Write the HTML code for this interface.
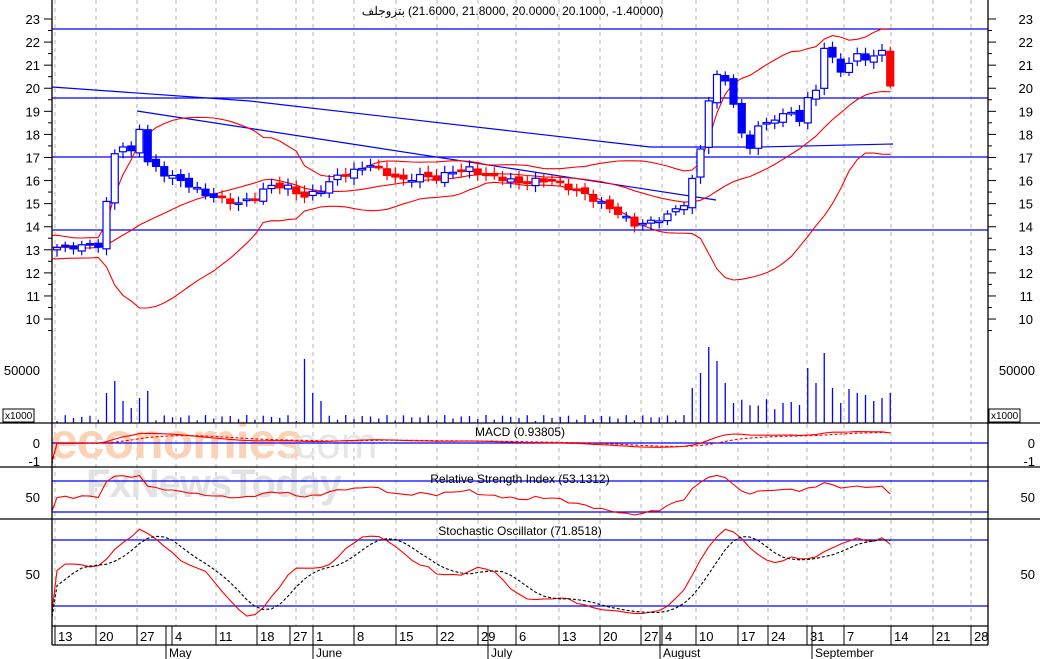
<!DOCTYPE html>
<html><head><meta charset="utf-8">
<style>
html,body{margin:0;padding:0;background:#fff;}
svg{display:block;font-family:"Liberation Sans","Noto Sans CJK SC",sans-serif;}
</style></head>
<body>
<svg id="c" width="1040" height="659" viewBox="0 0 1040 659" xmlns="http://www.w3.org/2000/svg">
<rect width="1040" height="659" fill="#fff"/>
<g id="grid" stroke="#b4b4b4" stroke-dasharray="4,4" stroke-width="1"></g>
<g id="wm">
<text x="50" y="458" font-size="50" fill="#fbd2b6" font-weight="bold" letter-spacing="-1">economies</text>
<text x="282" y="458" font-size="44" fill="#e6e6e6">.com</text>
<text x="86" y="497" font-size="40" fill="#e2e2e2" font-weight="bold" letter-spacing="-1">FxNewsToday</text>
</g>
<g id="plot"></g>
<g id="axes" stroke="#000" stroke-width="1.3" fill="none">
<line x1="52" y1="0" x2="52" y2="645"/>
<line x1="988" y1="0" x2="988" y2="645"/>
<line x1="0" y1="423" x2="1040" y2="423"/>
<line x1="0" y1="467" x2="1040" y2="467"/>
<line x1="0" y1="519" x2="1040" y2="519"/>
<line x1="52" y1="626" x2="988" y2="626"/>
<line x1="52" y1="645" x2="988" y2="645"/>
</g>
<g id="ticks" stroke="#000" stroke-width="1"></g>
<g font-size="12" fill="#000">
<text x="405" y="15" text-anchor="end">بتروجلف</text>
<text x="408" y="15" direction="ltr">(21.6000, 21.8000, 20.0000, 20.1000, -1.40000)</text>
</g>
<g font-size="12" fill="#000" text-anchor="middle">
<text x="520" y="436">MACD (0.93805)</text>
<text x="520" y="483">Relative Strength Index (53.1312)</text>
<text x="520" y="535">Stochastic Oscillator (71.8518)</text>
</g>
<g id="lbl" font-size="13" fill="#000"></g>
<rect x="3" y="409" width="31" height="13" fill="#fff" stroke="#000"/>
<text x="5" y="419" font-size="10">x1000</text>
<rect x="989" y="409" width="31" height="13" fill="#fff" stroke="#000"/>
<text x="991" y="419" font-size="10">x1000</text>
</svg>
<script>
var NS="http://www.w3.org/2000/svg";
function el(p,t,a,txt){var e=document.createElementNS(NS,t);for(var k in a)e.setAttribute(k,a[k]);if(txt!=null)e.textContent=txt;document.getElementById(p).appendChild(e);return e;}
var K=[[0,13.1],[5,13.2],[6,15],[7,17.2],[8,17.5],[9,17.2],[10,18.3],[11,16.8],[13,16.3],[15,16],[16,15.8],[18,15.4],[20,15.2],[22,15],[24,15.3],[26,15.8],[28,15.7],[30,15.3],[32,15.6],[34,16.2],[36,16.4],[38,16.7],[40,16.3],[42,16],[44,16.2],[46,16.1],[48,16.4],[50,16.5],[52,16.2],[54,16.1],[56,15.9],[58,16],[60,16],[62,15.7],[64,15.4],[66,15],[68,14.6],[70,14.1],[72,14.2],[74,14.5],[76,15],[77,16],[78,17.4],[79,19.5],[80,20.5],[81,20.4],[82,19.3],[83,18],[84,17.5],[85,18.3],[86,18.5],[87,18.7],[88,18.8],[89,19],[90,18.6],[91,19.5],[92,20],[93,21.7],[94,21.3],[95,20.8],[96,21],[97,21.5],[98,21.3],[99,21.3],[100,21.7],[101,20.1]];
var N=102,C=[];
for(var j=0;j<K.length-1;j++){var a=K[j],b=K[j+1];for(var i=a[0];i<b[0];i++){var t=(i-a[0])/(b[0]-a[0]);C[i]=a[1]+(b[1]-a[1])*t+0.1*Math.sin(i*2.3);}}
C[101]=20.1;
var H=[];for(var i=0;i<30;i++)H.push(13.3+0.35*Math.sin(i*0.7)-0.01*i);
var A=H.concat(C),P=30;
function X(i){return 57+i*8.25;}
function Y(p){return 19+(23-p)*23.08;}
var G=[55,96,137,176,216,257,296,313,354,396,437,478,516,559,600,641,662,696,738,768,807,844,891,933,971];
G.forEach(function(x){el("grid","line",{x1:x,y1:0,x2:x,y2:626});});
[29,98,157,230].forEach(function(v){el("plot","line",{x1:52,y1:v,x2:988,y2:v,stroke:"#0000ff","stroke-width":1.3});});
el("plot","polyline",{points:"52,87 250,101 650,147 760,147 893,144",fill:"none",stroke:"#0000ff","stroke-width":1.2});
el("plot","line",{x1:137,y1:111,x2:716,y2:200,stroke:"#0000ff","stroke-width":1.2});
var up=[],mid=[],lo=[];
for(var i=0;i<N;i++){var s=0,q=0;for(var k=0;k<20;k++){s+=A[P+i-k];}var m=s/20;for(k=0;k<20;k++){q+=Math.pow(A[P+i-k]-m,2);}var sd=Math.sqrt(q/20);
up.push(X(i)+","+Y(m+2*sd).toFixed(1));mid.push(X(i)+","+Y(m).toFixed(1));lo.push(X(i)+","+Y(m-2*sd).toFixed(1));}
[up,mid,lo].forEach(function(p){el("plot","polyline",{points:"52,"+p[0].split(",")[1]+" "+p.join(" "),fill:"none",stroke:"#ff0000","stroke-width":1.1});});
for(var i=0;i<N;i++){var c=C[i],o=i?C[i-1]+0.1*Math.sin(i*1.7):13.0;var hi=Math.max(o,c)+0.15+0.15*Math.abs(Math.sin(i*3.1)),lw=Math.min(o,c)-0.15-0.15*Math.abs(Math.cos(i*2.7));
if(i==101){o=21.6;hi=21.8;lw=20.0;}
var x=X(i),upc=c>=o,col=upc?"#0000ff":((i>=20&&i<76)||i==101?"#ff0000":"#0000ff");
el("plot","line",{x1:x,y1:Y(hi),x2:x,y2:Y(lw),stroke:col,"stroke-width":1.2});
var y1=Y(Math.max(o,c)),h=Math.max(1.5,Y(Math.min(o,c))-y1);
el("plot","rect",{x:x-3.5,y:y1,width:7,height:h,fill:upc?"#fff":col,stroke:col,"stroke-width":1.2});}
var SP={6:30,7:42,8:22,9:15,10:25,11:32,30:64,31:30,32:22,77:35,78:50,79:76,80:62,81:40,82:20,91:55,92:40,93:70,94:35,95:20,96:34,97:30,98:28,99:22,100:25,101:30};
for(var i=0;i<N;i++){var v=SP[i]!=null?SP[i]:2+6*Math.abs(Math.sin(i*1.3));if(i>82&&SP[i]==null)v+=8+8*Math.abs(Math.sin(i*2.1));
el("plot","line",{x1:X(i),y1:423,x2:X(i),y2:423-v,stroke:"#0000ff","stroke-width":1.3});}
function ema(arr,n){var k=2/(n+1),r=[arr[0]];for(var i=1;i<arr.length;i++)r.push(arr[i]*k+r[i-1]*(1-k));return r;}
var e12=ema(A,12),e26=ema(A,26),mc=A.map(function(_,i){return e12[i]-e26[i];}),sg=ema(mc,9);
var mp=[],sp=[];for(var i=0;i<N;i++){mp.push(X(i)+","+Math.max(425,443-mc[P+i]*9).toFixed(1));sp.push(X(i)+","+Math.max(425,443-sg[P+i]*9).toFixed(1));}
el("plot","line",{x1:52,y1:443,x2:988,y2:443,stroke:"#0000ff","stroke-width":1.2});
el("plot","polyline",{points:"52,461 "+mp.join(" "),fill:"none",stroke:"#ff0000","stroke-width":1.1});
el("plot","polyline",{points:"52,464 "+sp.join(" "),fill:"none",stroke:"#ff0000","stroke-width":1.1,"stroke-dasharray":"3,2"});
el("plot","line",{x1:52,y1:481,x2:988,y2:481,stroke:"#0000ff","stroke-width":1.2});
el("plot","line",{x1:52,y1:512,x2:988,y2:512,stroke:"#0000ff","stroke-width":1.2});
var ag=0.05,al=0.05,rp=[];
for(var i=1;i<A.length;i++){var d=A[i]-A[i-1];ag=(ag*13+Math.max(d,0))/14;al=(al*13+Math.max(-d,0))/14;var r=100-100/(1+ag/al);if(i>=P){var yy=497-(r-50)*0.6;yy=Math.max(471,Math.min(515,yy));rp.push(X(i-P)+","+yy.toFixed(1));}}
el("plot","polyline",{points:"52,511 "+rp.join(" "),fill:"none",stroke:"#ff0000","stroke-width":1.1});
el("plot","line",{x1:52,y1:540,x2:988,y2:540,stroke:"#0000ff","stroke-width":1.2});
el("plot","line",{x1:52,y1:606,x2:988,y2:606,stroke:"#0000ff","stroke-width":1.2});
var kr=[];for(var i=0;i<A.length;i++){var hh=-1e9,ll=1e9;for(var k=0;k<14&&i-k>=0;k++){hh=Math.max(hh,A[i-k]+0.2);ll=Math.min(ll,A[i-k]-0.2);}kr.push(100*(A[i]-ll)/(hh-ll));}
function sm(a,n){return a.map(function(_,i){var s=0,c=0;for(var k=0;k<n&&i-k>=0;k++){s+=a[i-k];c++;}return s/c;});}
var ks=sm(kr,5),ds=sm(ks,5);
var kp=[],dp=[];function SY(v){return (574-(v-50)*1.0).toFixed(1);}
for(var i=0;i<N;i++){kp.push(X(i)+","+SY(ks[P+i]));dp.push(X(i)+","+SY(ds[P+i]));}
el("plot","polyline",{points:"52,612 "+kp.join(" "),fill:"none",stroke:"#ff0000","stroke-width":1.1});
el("plot","polyline",{points:"52,617 "+dp.join(" "),fill:"none",stroke:"#000","stroke-width":1.1,"stroke-dasharray":"3,2"});
for(var p=10;p<=23;p++){var y=Y(p);el("lbl","text",{x:40,y:y+5,"text-anchor":"end"},p);el("lbl","text",{x:1033,y:y+5,"text-anchor":"end"},p);
el("ticks","line",{x1:44,y1:y,x2:52,y2:y});el("ticks","line",{x1:988,y1:y,x2:996,y2:y});
el("ticks","line",{x1:48,y1:y+11.5,x2:52,y2:y+11.5});el("ticks","line",{x1:988,y1:y+11.5,x2:992,y2:y+11.5});}
[["50000",375],["0",448],["-1",466],["50",502],["50",579]].forEach(function(l){el("lbl","text",{x:40,y:l[1],"text-anchor":"end"},l[0]);el("lbl","text",{x:1035,y:l[1],"text-anchor":"end"},l[0]);});
var D=[["13",55],["20",96],["27",137],["4",172],["11",216],["18",257],["27",290],["1",313],["8",354],["15",396],["22",437],["29",478],["6",516],["13",559],["20",600],["27",641],["4",662],["10",696],["17",738],["24",768],["31",807],["7",844],["14",891],["21",933],["28",971]];
D.forEach(function(d){el("ticks","line",{x1:d[1],y1:626,x2:d[1],y2:645});el("lbl","text",{x:d[1]+3,y:641},d[0]);});
[["May",166],["June",313],["July",488],["August",660],["September",812]].forEach(function(m){el("ticks","line",{x1:m[1],y1:626,x2:m[1],y2:659});el("lbl","text",{x:m[1]+3,y:657,"font-size":12},m[0]);});
</script>
</body></html>
